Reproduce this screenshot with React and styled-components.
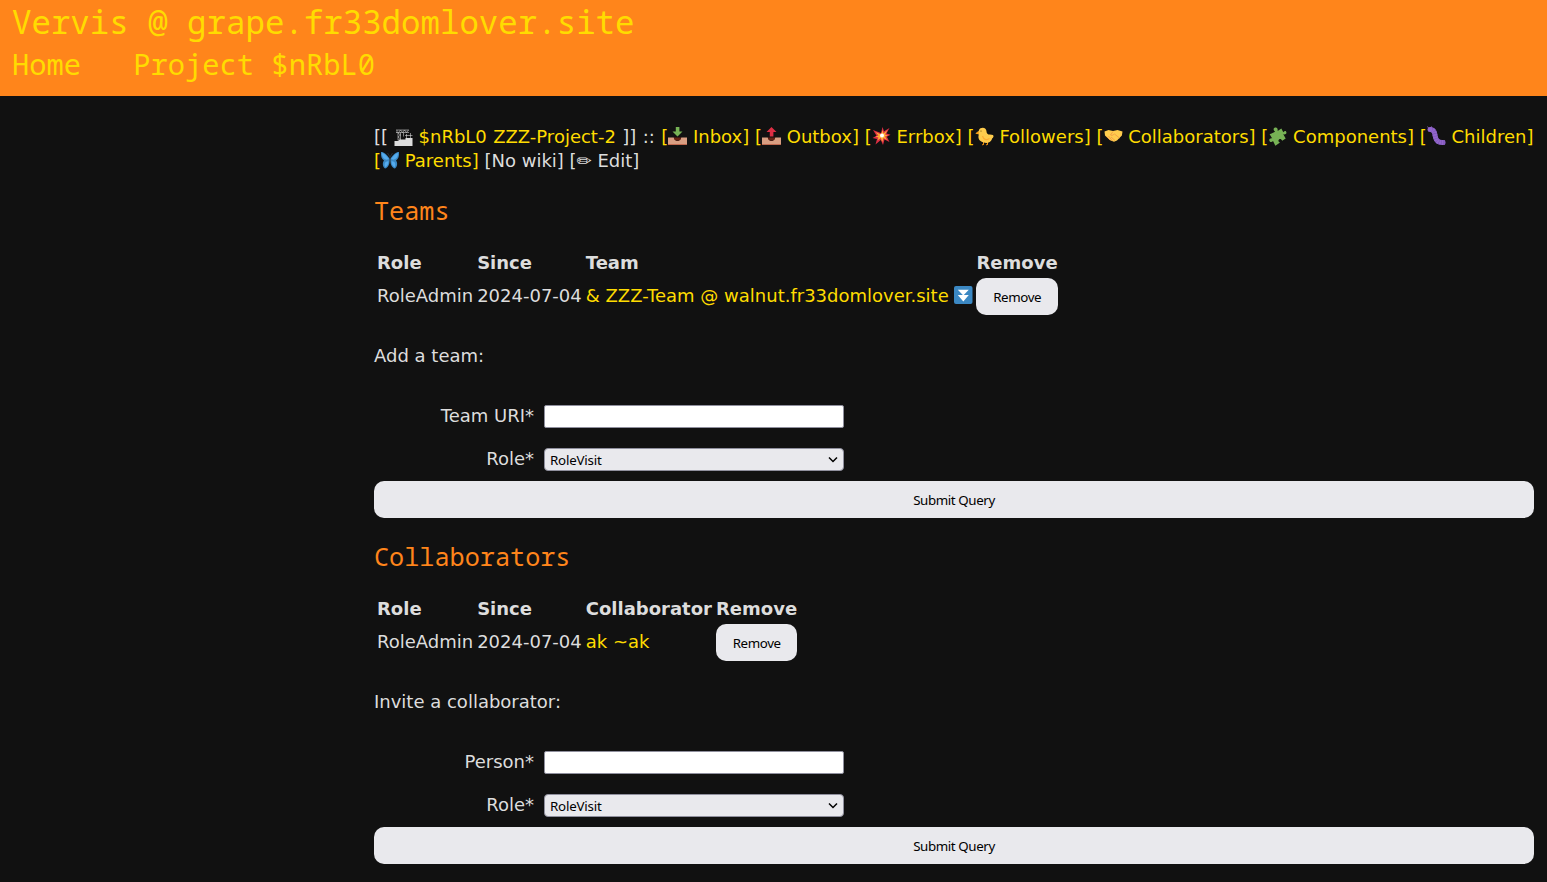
import React from "react";
import styled, { createGlobalStyle } from "styled-components";

const GlobalStyle = createGlobalStyle`
  html { background: #111; }
  body { margin: 0; background: #111; color: #ddd; font: 18px/24px "DejaVu Sans", sans-serif; overflow: hidden; }
`;
const mono = `"Noto Sans Mono", "DejaVu Sans Mono", monospace`;
const controlFont = `"Noto Sans", sans-serif`;

const Header = styled.header`
  box-sizing: border-box;
  height: 96px;
  padding: 1px 12px 0;
  background: #ff851b;
  color: #ffdc00;
  font-family: ${mono};
`;
const SiteTitle = styled.div`
  height: 42px;
  font-size: 32.43px;
  line-height: 42px;
  white-space: pre;
`;
const Crumbs = styled.nav`
  display: flex;
  gap: 52px;
  font-size: 28.8px;
  line-height: 42px;
`;
const Main = styled.main`
  margin-left: 374px;
  width: 1160px;
  padding-top: 29px;
`;
const NavBar = styled.div`
  height: 48px;
  white-space: nowrap;
`;
const ActorName = styled.span`
  word-spacing: 0.65px;
`;
const Link = styled.a`
  color: #ffdc00;
`;
const Emoji = styled.svg`
  display: inline-block;
  width: ${(p) => p.$w}px;
  height: 20px;
  vertical-align: -3px;
  overflow: visible;
`;
const Heading = styled.h2`
  margin: ${(p) => p.$top}px 0 0;
  height: 34px;
  color: #ff851b;
  font: normal 25.2px/34px ${mono};
`;
const Table = styled.table`
  margin-top: 21px;
  border-spacing: 2px;
  line-height: 24px;
`;
const Th = styled.th`
  padding: 1px;
  text-align: left;
`;
const Td = styled.td`
  padding: 0 1px;
  height: 37px;
  vertical-align: top;
  line-height: 36px;
`;
const RemoveCell = styled.td`
  padding: 0 1px;
`;
const Button = styled.button`
  display: block;
  box-sizing: border-box;
  width: ${(p) => p.$w};
  height: 37px;
  padding: 1px 0 0;
  border: 0;
  border-radius: 10px;
  background: #e9e9ed;
  color: #000;
  font: 13.333px/20px ${controlFont};
  letter-spacing: -0.4px;
`;
const Prompt = styled.p`
  margin: 27px 0 0;
`;
const Form = styled.form`
  margin-top: 37px;
`;
const Field = styled.div`
  display: flex;
  gap: 10px;
  height: 23px;
  margin-bottom: ${(p) => p.$gap}px;
`;
const Label = styled.label`
  width: 160px;
  text-align: right;
  line-height: 22px;
`;
const Input = styled.input`
  box-sizing: border-box;
  width: 300px;
  height: 23px;
  border: 1px solid #8f8f9d;
  border-radius: 2px;
  background: #fff;
`;
const Select = styled.div`
  box-sizing: border-box;
  display: flex;
  justify-content: space-between;
  align-items: center;
  width: 300px;
  height: 23px;
  padding: 1px 5px 0;
  border: 1px solid #8f8f9d;
  border-radius: 4px;
  background: #e9e9ed;
  color: #000;
  font: 13.333px/20px ${controlFont};
  letter-spacing: -0.2px;
`;

const Tray = () => (
  <>
    <path d="M.5 11.500h5.800c.4 4.500 7 4.500 7.400 0h5.800V18q0 1-1 1h-17q-1 0-1-1z" fill="#d99e82" />
    <path d="M6.300 11.500h7.400c-.4 4.300-7 4.300-7.400 0" fill="#662113" />
    <path d="M.5 18h19q0 1-1 1h-17q-1 0-1-1" fill="#c1694f" />
  </>
);
const icons = {
  crane: (
    <>
      <path d="M1 15h4v-1.500h7V12h7v8H1z" fill="#ddd" />
      <path d="M2.500 4h13M2.500 6.500h13M3.500 4v3M4.500 6.500v8M7 6.500v8M4.500 7 7 9l-2.500 2L7 13M5 6.500l2-2.500 2 2.500L11 4l2 2.500L15 4M10 6.500v4M13 8v5M17 7v5M11.500 9.500H19" fill="none" stroke="#ddd" strokeWidth=".7" opacity=".8" />
    </>
  ),
  inbox: (<><Tray /><path d="M8.300 1h3.600v4.500H15l-5 5-5-5h3.300z" fill="#77b255" /></>),
  outbox: (<><Tray /><path d="M10 1l5 5h-3.100v4.500H8.300V6H5z" fill="#dd2e44" /></>),
  boom: (
    <>
      <path d="M9.500 7 11 1l1.500 4.300L18 2l-3 5.500 4 1.200-3.600 2L18 16l-5-2.500-1.500 5.500-2.200-5L4 18.500 5.500 13 1 12l4-2.200L1.500 4 8 6.500z" fill="#dd2e44" />
      <path d="M9.700 8.500 11 4l1 3.500 4-3.500-2.500 4.500 3 1-3 1 2 3.500-3.500-2-1.200 4-1.600-4L6 14.500 7 11.500l-3-1 3-1L4 6l4.500 2z" fill="#ffac33" />
      <circle cx="10.500" cy="9.500" r="2" fill="#fff" />
    </>
  ),
  chick: (
    <>
      <path d="M9 15.500v3M13 15.500v3M7.500 19l2-1M11.500 19l2-1" stroke="#f4900c" strokeWidth="1" />
      <path d="M6 2.200c3-1.500 6 .2 6 3.200 0 2 1.500 3.300 3.400 3.200 2.700 0 4 .8 3.600 2-.3 1.500-1.200 1.300-1.600 2.600-1 3-4.400 4.300-8 3.400-4.700-1.100-6.400-4.500-5-8L1 7.500 4.300 5c0-1.200.6-2.200 1.700-2.800" fill="#ffcc4d" />
      <path d="M8 10c1 3.500 4 4.500 7 2.500" fill="none" stroke="#ffac33" strokeWidth="1.200" />
      <path d="M1 7.500 4 5l.3 3z" fill="#f4900c" /><circle cx="6.500" cy="5" r=".6" fill="#664500" />
    </>
  ),
  hands: (
    <>
      <path d="M1 5.500 5 4l4.500 1L14 4l5 1.500-.6 4-4.900 5-3 1.300-4-1.600L1.500 9.500z" fill="#ffcc4d" />
      <path d="M9.500 5.500 7 9c1.500 1.300 3-.6 4-1l5 4M3 10.500l3.500 3.500M5 10l4 5M7.500 11l4 3.500" fill="none" stroke="#ef9645" strokeWidth=".8" />
    </>
  ),
  puzzle: <path transform="rotate(-18 10 10)" d="M9 5.200C7.500 3 8.400 1 10.400 1.200c2 .2 2.300 2 1.300 4L16 4l.7 4.200c2-1.300 3-.5 2.900 1-.1 1.600-1.700 2-3.600 1l1 4.800-4 1c-.3-2-1.400-2.700-2.600-2.200-1.400.6-1.300 1.800 0 3.200L5 18.500l-.8-5.100C2.400 14.500.8 13.500.8 12c0-1.600 1.500-2.300 3.500-1.300L3 6z" fill="#77b255" />,
  worm: (
    <>
      <path d="M3.500 3.500c4 0 4.500 3 5.200 6.500.7 4 2.300 6.800 8 6.500" fill="none" stroke="#744eaa" strokeWidth="5" strokeLinecap="round" />
      <path d="M3.500 3.500c4 0 4.500 3 5.200 6.500.7 4 2.300 6.800 8 6.500h1.500" fill="none" stroke="#9266cc" strokeWidth="4.800" strokeDasharray="2 .4" />
      <circle cx="3.500" cy="3.500" r="2.200" fill="#9266cc" />
      <path d="M2 2 1 .5M4.500 1.500 5 .3" stroke="#9266cc" strokeWidth=".8" />
    </>
  ),
  butterfly: (
    <>
      <path d="M10 9C6.500 4 3 1.500 1 2c-.3 4 .5 7 3 8.500-2 2.500-1.200 6.500 1 8C8 18 9.500 14 10 11c.5 3 2 7 5 7.500 2.200-1.500 3-5.500 1-8 2.500-1.500 3.300-4.500 3-8.500-2-.5-5.500 2-9 7" fill="#3b88c3" />
      <path d="M9 9C6.500 5.500 4 3.300 2 3c0 3 .8 5.800 4.500 6.800M11 9c2.500-3.500 5-5.700 7-6 0 3-.8 5.800-4.500 6.800M8.500 11.200c-3-.5-5 2.500-3.200 6 2-.8 3.200-3.500 3.200-6m3 0c3-.5 5 2.500 3.200 6-2-.8-3.200-3.500-3.200-6" fill="#55acee" />
      <path d="M10 7v7M10 7 7.500 3M10 7l2.500-4" stroke="#292f33" strokeWidth="1" />
    </>
  ),
  down: (
    <>
      <rect x="1" y="1" width="18.500" height="18" rx="2" fill="#3b88c3" />
      <path d="M4.800 4.800h11L10.300 10.600z M4.800 10h11L10.300 16.500z" fill="#fff" />
    </>
  ),
};
const Icon = ({ name, w = 19 }) => (
  <Emoji $w={w} viewBox={`${(20 - w) / 2} 0 ${w} 20`} aria-hidden="true">{icons[name]}</Emoji>
);

const links = [
  ["inbox", "Inbox"], ["outbox", "Outbox"], ["boom", "Errbox"], ["chick", "Followers"],
  ["hands", "Collaborators"], ["puzzle", "Components"], ["worm", "Children"],
];

const RoleForm = ({ label }) => (
  <Form>
    <Field $gap={20}><Label>{label}</Label><Input /></Field>
    <Field $gap={10}>
      <Label>Role*</Label>
      <Select>
        RoleVisit
        <svg width="10" height="8" viewBox="0 0 10 8"><path d="M1 1.500 5 5.500 9 1.500" fill="none" stroke="#000" strokeWidth="1.500" /></svg>
      </Select>
    </Field>
    <Button type="button" $w="100%">Submit Query</Button>
  </Form>
);

const Members = ({ title, column, top, children, prompt, label }) => (
  <section>
    <Heading $top={top}>{title}</Heading>
    <Table>
      <tbody>
        <tr><Th>Role</Th><Th>Since</Th><Th>{column}</Th><Th>Remove</Th></tr>
        <tr>
          <Td>RoleAdmin</Td><Td>2024-07-04</Td><Td>{children}</Td>
          <RemoveCell><Button $w="81.500px">Remove</Button></RemoveCell>
        </tr>
      </tbody>
    </Table>
    <Prompt>{prompt}</Prompt>
    <RoleForm label={label} />
  </section>
);

export default function App() {
  return (
    <>
      <GlobalStyle />
      <Header>
        <SiteTitle>Vervis @ grape.fr33domlover.site</SiteTitle>
        <Crumbs><span>Home</span><span>Project $nRbL0</span></Crumbs>
      </Header>
      <Main>
        <NavBar>
          [[ <Icon name="crane" /> <ActorName><Link>$nRbL0 ZZZ-Project-2</Link> ]] :: </ActorName>
          {links.map(([icon, text]) => (
            <React.Fragment key={text}><Link>[<Icon name={icon} /> {text}]</Link>{" "}</React.Fragment>
          ))}
          <br />
          <Link>[<Icon name="butterfly" w={18} /> Parents]</Link> [No wiki] [✏ Edit]
        </NavBar>
        <Members title="Teams" top={20} column="Team" prompt="Add a team:" label="Team URI*">
          <Link>&amp; ZZZ-Team @ walnut.fr33domlover.site <Icon name="down" w={18} /></Link>
        </Members>
        <Members title="Collaborators" top={21} column="Collaborator" prompt="Invite a collaborator:" label="Person*">
          <Link>ak ~ak</Link>
        </Members>
      </Main>
    </>
  );
}
